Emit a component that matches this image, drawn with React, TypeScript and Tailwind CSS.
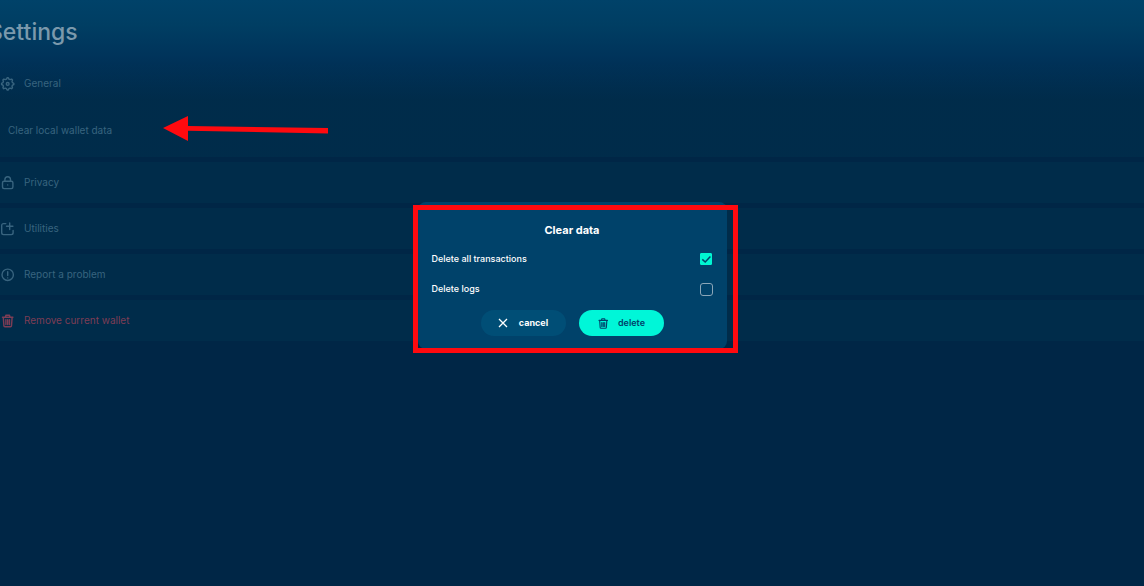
import { useState } from "react";
import type { ReactNode } from "react";

function Icon({ children, className = "size-4" }: { children: ReactNode; className?: string }) {
  return (
    <svg
      viewBox="0 0 16 16"
      className={`shrink-0 ${className}`}
      fill="none"
      stroke="currentColor"
      strokeWidth="1.4"
      strokeLinecap="round"
      strokeLinejoin="round"
      aria-hidden="true"
    >
      {children}
    </svg>
  );
}

const GearIcon = () => (
  <Icon>
    <path d="M6.5 3.100 7.100 1.800h1.200l.6 1.300 1.200.5 1.500-.5.9.9-.5 1.500.5 1.200 1.300.6v1.200l-1.300.6-.5 1.200.5 1.500-.9.9-1.500-.5-1.200.5-.6 1.300H7.100l-.6-1.300-1.200-.5-1.500.5-.9-.9.5-1.500-.5-1.200-1.300-.6V7.300l1.300-.6.5-1.200-.5-1.500.9-.9 1.500.5Z" />
    <circle cx="7.700" cy="7.900" r="1.400" />
  </Icon>
);

const LockIcon = () => (
  <Icon>
    <rect x="2.500" y="6.200" width="10.400" height="7.400" rx="1.500" />
    <path d="M4.900 6V4.600a2.800 2.800 0 0 1 5.600 0V6M7.700 9.900h.01" />
  </Icon>
);

const UtilitiesIcon = () => (
  <Icon>
    <path d="M5.800 2.600H3.500a1.800 1.800 0 0 0-1.800 1.800v7.400a1.800 1.800 0 0 0 1.800 1.800h7.800a1.800 1.800 0 0 0 1.800-1.800V9.400M9.700 2v6.600M6.500 5.300h6.400" />
  </Icon>
);

const AlertIcon = () => (
  <Icon>
    <circle cx="7.700" cy="7.800" r="5.700" />
    <path d="M7.700 4.700v3.900M7.700 10.900h.01" />
  </Icon>
);

const TrashIcon = ({ className }: { className?: string }) => (
  <Icon className={className}>
    <path d="M2.500 4.200h10.400M5.500 4 5.900 2.200h3.600l.4 1.800M3.300 4.600l.6 8.200c0 .6.500 1 1.100 1h5.400c.6 0 1.100-.4 1.100-1l.6-8.200M5.900 6.700v4.900M7.700 6.700v4.900M9.500 6.700v4.900" />
  </Icon>
);

function Row({ icon, label, danger = false }: { icon: ReactNode; label: string; danger?: boolean }) {
  return (
    <button
      type="button"
      className={`flex h-[41px] w-full items-center gap-2 pl-3 text-left ${danger ? "text-[#7d3d55]" : "text-[#38647f]"}`}
    >
      {icon}
      {label}
    </button>
  );
}

const panel = "bg-[#006070]/10";

function Option({ label, initial }: { label: string; initial: boolean }) {
  const [checked, setChecked] = useState(initial);
  return (
    <label className="flex h-[30px] items-center justify-between text-[9px] font-medium">
      {label}
      <span className="grid size-[13px] place-items-center">
        <input
          type="checkbox"
          checked={checked}
          onChange={(e) => setChecked(e.target.checked)}
          className="col-start-1 row-start-1 size-[13px] appearance-none rounded-[3px] border border-[#8ba6b8] checked:size-3 checked:rounded-[1px] checked:border-[#00f6d2] checked:bg-[#00f6d2]"
        />
        {checked && (
          <svg viewBox="0 0 13 13" className="pointer-events-none col-start-1 row-start-1 size-[13px]" fill="none" stroke="#00426a" strokeWidth="1.5" aria-hidden="true">
            <path d="M2.300 6.400 5.200 9l5.200-5.600" />
          </svg>
        )}
      </span>
    </label>
  );
}

export default function App() {
  return (
    <div className="relative min-h-screen overflow-hidden bg-[#002646] bg-[linear-gradient(#004269_0px,#003e63_25px,#00335a_58px,#002646_100px)] font-['Inter',sans-serif] text-[10px]">
      <main className="-ml-3 pt-4">
        <h1 className="text-[23px] leading-8 font-medium text-[#7b99ac]">Settings</h1>
        <div className="mt-[15px] flex flex-col gap-[5px]">
          <section className="h-[94px] bg-linear-to-b from-transparent to-[#006070]/10 to-40%">
            <Row icon={<GearIcon />} label="General" />
            <button type="button" className="mt-[14px] flex h-6 items-center pl-5 text-[#38647f]">
              Clear local wallet data
            </button>
          </section>
          <section className={panel}><Row icon={<LockIcon />} label="Privacy" /></section>
          <section className={panel}><Row icon={<UtilitiesIcon />} label="Utilities" /></section>
          <section className={panel}><Row icon={<AlertIcon />} label="Report a problem" /></section>
          <section className={panel}><Row icon={<TrashIcon />} label="Remove current wallet" danger /></section>
        </div>
      </main>

      <svg className="absolute top-[115px] left-[163px] h-[27px] w-[166px]" viewBox="0 0 166 27" aria-hidden="true">
        <path d="M0 13 25 1v10l140 2v5.400L25 15.800V26Z" fill="#ff0a0f" />
      </svg>

      <div className="absolute inset-x-0 top-[202px] flex justify-center">
        <div role="dialog" aria-labelledby="dialog-title" className="relative w-[309px] rounded-lg bg-[#00426a] px-[14px] pt-[18px] pb-[13px] text-white">
          <h2 id="dialog-title" className="text-center text-[11px] leading-5 font-bold">Clear data</h2>
          <div className="mt-1">
            <Option label="Delete all transactions" initial />
            <Option label="Delete logs" initial={false} />
          </div>
          <div className="mt-[6px] flex justify-center gap-[13px] text-[9px]">
            <button type="button" className="flex h-[26px] w-[85px] items-center justify-center gap-[11px] rounded-full bg-[#004e76] font-bold">
              <svg viewBox="0 0 10 10" className="size-[10px]" fill="none" stroke="currentColor" strokeWidth="1.300" aria-hidden="true">
                <path d="m1 1 8 8M9 1 1 9" />
              </svg>
              cancel
            </button>
            <button type="button" className="flex h-[26px] w-[85px] items-center justify-center gap-2 rounded-full bg-[#00f6d8] font-semibold text-[#00426a]">
              <TrashIcon className="size-[13px]" />
              delete
            </button>
          </div>
          <div className="pointer-events-none absolute top-[3px] -right-[11px] -bottom-1 -left-[5px] border-[5px] border-[#ff0a0f]" />
        </div>
      </div>
    </div>
  );
}
